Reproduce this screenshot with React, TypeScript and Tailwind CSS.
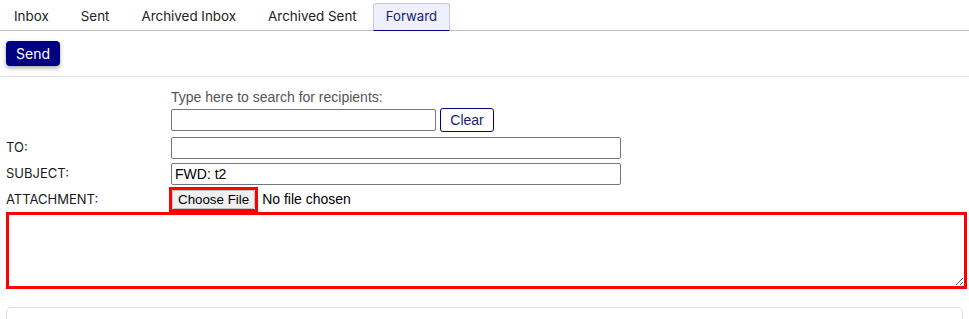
const tabs = ["Inbox", "Sent", "Archived Inbox", "Archived Sent", "Forward"];

const Field = ({ label, children }: { label: string; children: React.ReactNode }) => (
  <div className="grid grid-cols-[165px_1fr] items-center">
    <span className="text-[13px] text-[#1a1a1a]">{label}</span>
    <div className="flex items-center">{children}</div>
  </div>
);

export default function App() {
  const active = "Forward";

  return (
    <div className="min-h-[319px] bg-white font-['Inter',sans-serif] text-[#333]">
      <nav className="flex items-end gap-[8px] border-b border-[#bbb] pl-[2px] pt-[3px]">
        {tabs.map((tab) => (
          <button
            className={
              tab === active
                ? "-mb-px -ml-[4px] h-[28px] rounded-t-[3px] border border-b-[#000080] border-[#c8c8d0] bg-[#eef0fd] px-[12px] text-[13.2px] text-[#1a1a6e]"
                : "h-[27px] px-3 text-[13.4px] text-[#222]"
            }
            key={tab}
            type="button"
          >
            {tab}
          </button>
        ))}
      </nav>

      <div className="border-b border-[#ddd] px-[6px] pb-[10px] pt-[10px]">
        <button
          className="h-[25px] w-[54px] rounded-[4px] bg-[#000080] text-[14px] text-white shadow-[0_2px_4px_rgba(0,0,0,0.35)]"
          type="button"
        >
          Send
        </button>
      </div>

      <form className="px-[6px] font-['Liberation_Sans',Arial,sans-serif]">
        <div className="ml-[165px] pt-[12px]">
          <p className="text-[14px] leading-[16px] text-[#555]">
            Type here to search for recipients:
          </p>
          <div className="mt-[3px] flex items-center gap-1">
            <input className="h-[22px] w-[265px] rounded-[2px] border border-[#767676] px-[2px] text-[13px]" type="text" />
            <button
              className="h-[24px] w-[54px] rounded-[3px] border border-[#000080] bg-white text-[14px] text-[#1a1a6e]"
              type="button"
            >
              Clear
            </button>
          </div>
        </div>

        <div className="mt-[5px] flex flex-col gap-[4px] font-['Inter',sans-serif]">
          <Field label="TO:">
            <input className="h-[22px] w-[450px] rounded-[2px] border border-[#767676] px-[2px] font-['Liberation_Sans',Arial,sans-serif] text-[14px]" type="text" />
          </Field>
          <Field label="SUBJECT:">
            <input
              className="h-[22px] w-[450px] rounded-[2px] border border-[#767676] px-[3px] font-['Liberation_Sans',Arial,sans-serif] text-[14px] text-black"
              defaultValue="FWD: t2"
              type="text"
            />
          </Field>
          <div className="-mt-[2px] grid grid-cols-[163px_1fr] items-center">
            <span className="text-[13px] text-[#1a1a1a]">ATTACHMENT:</span>
            <div className="flex items-center font-['Liberation_Sans',Arial,sans-serif]">
              <span className="border-[3px] border-[#f00]">
                <span className="block h-[19px] rounded-[2px] border border-[#c4c4c4] bg-[#efefef] px-[5px] text-[13.33px] leading-[17px] text-black">
                  Choose File
                </span>
              </span>
              <span className="ml-[4px] text-[14px] text-black">No file chosen</span>
            </div>
          </div>
        </div>

        <textarea className="block h-[77px] w-[961px] border-[3px] border-[#f00] text-[13px]" />

        <div className="mt-[18px] h-[40px] w-[957px] rounded-[5px] border border-[#ddd]" />
      </form>
    </div>
  );
}
